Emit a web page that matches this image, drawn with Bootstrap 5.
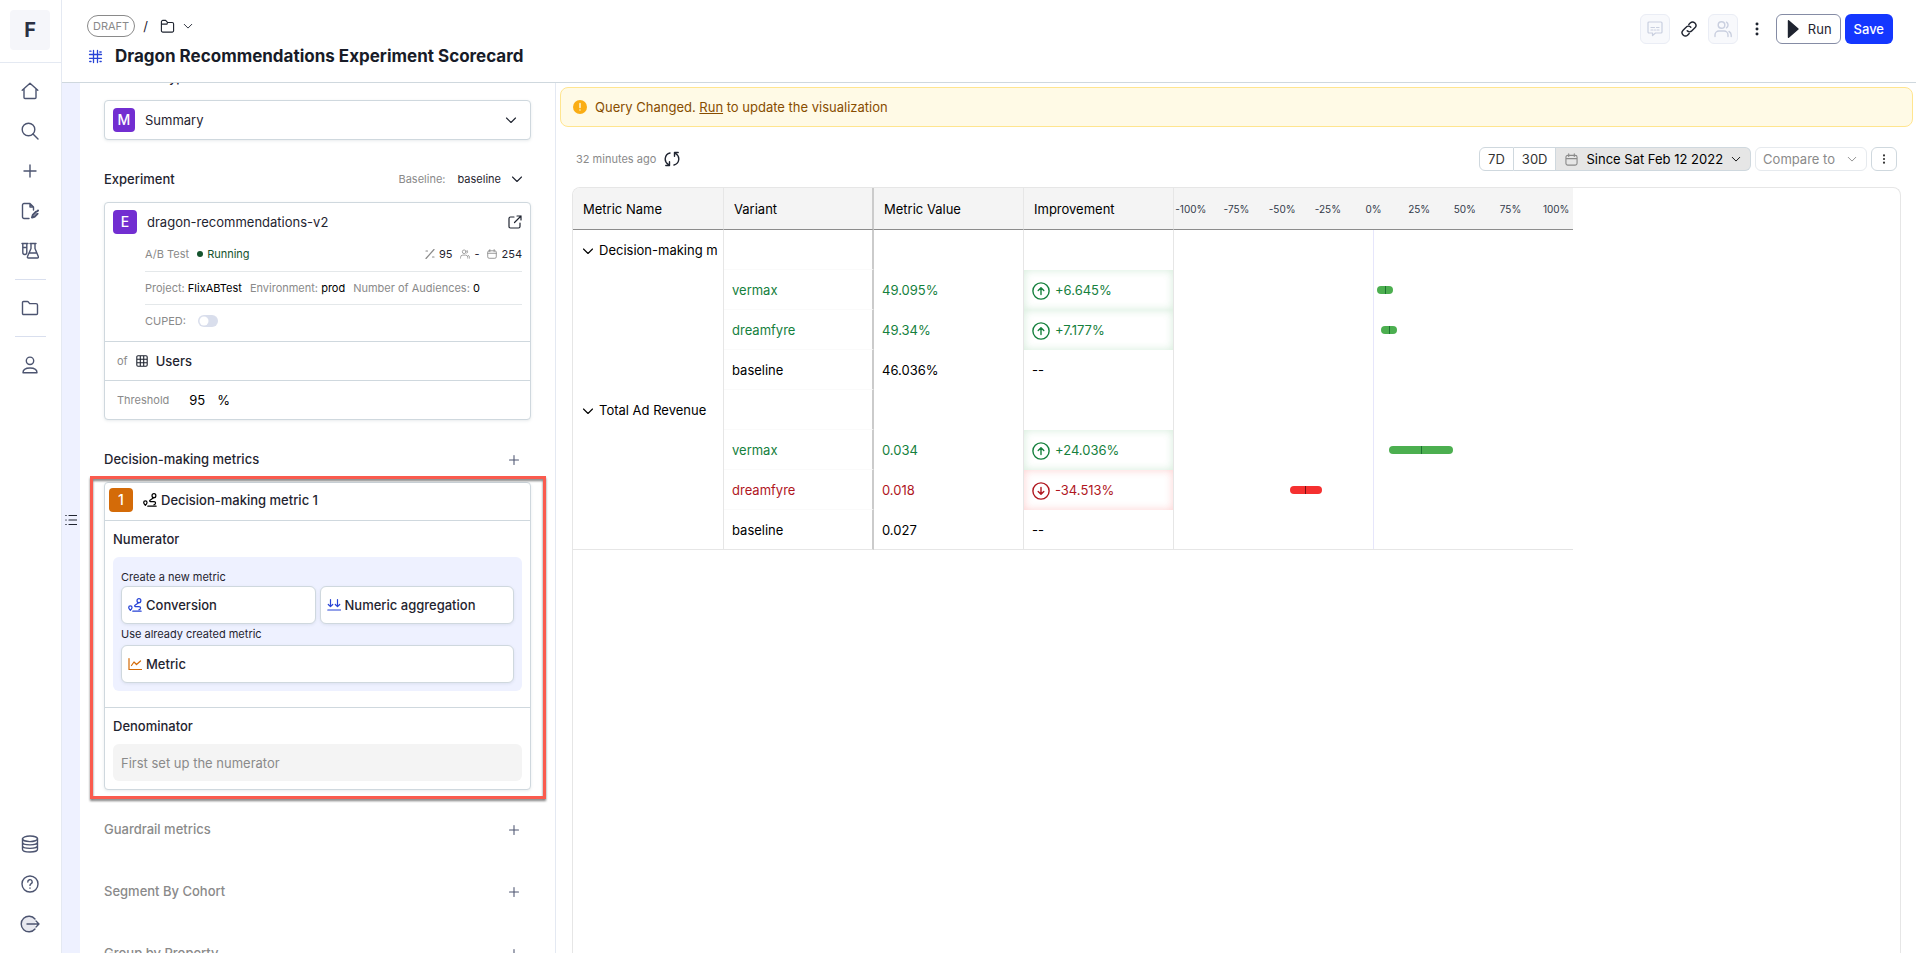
<!DOCTYPE html>
<html lang="en">
<head>
<meta charset="utf-8">
<meta name="viewport" content="width=device-width, initial-scale=1">
<title>Dragon Recommendations Experiment Scorecard</title>
<link href="https://cdn.jsdelivr.net/npm/bootstrap@5.3.0/dist/css/bootstrap.min.css" rel="stylesheet">
<style>
:root{--ink:#1f2430;--slate:#4c5470;--muted:#8a8a8a;--line:#cfd8de;--soft:#e6e6e6;--tint:#eef1ff}
body{font-family:Inter,"Liberation Sans",sans-serif;font-size:13px;line-height:20px;color:var(--ink);background:#fff}
svg{fill:none;stroke:currentColor;stroke-width:1.4;stroke-linecap:round;stroke-linejoin:round;flex:none}
button{color:inherit;font:inherit}
.btn{font-size:13px;line-height:20px;color:inherit}
.app{height:100vh;overflow:hidden}
.fill{min-width:0;min-height:0}
.rail{width:62px;border-right:1px solid #e4e9f2;color:var(--slate)}
.rail .brand{height:63px;border-bottom:1px solid #e4e9f2;padding-top:10px}
.rail .logo{width:40px;height:40px;border-radius:4px;background:#f5f6fa;font-size:20px;font-weight:700;color:#2b3042}
.rail .links{padding-right:1px}
.rail .foot{padding-bottom:9px}
.rail a{height:40px;color:inherit}
.rail hr{width:31px;margin:8px 0;border-color:#d9dfee;opacity:1}
.topbar{height:83px;border-bottom:1px solid var(--line);padding:14px 23px 0 25px}
.crumb{height:26px;margin-bottom:5px}
.pill{border:1px solid #8a8a8a;border-radius:12px;color:#8a8a8a;padding:0 5px;font-size:11px}
.topbar .top-left{margin-top:-1px}
.topbar h1{font-size:17px;line-height:24px;font-weight:700;color:#181c28}
.sq{width:30px;height:30px;padding:0;border-radius:6px}
.sq.off{background:#f8f9fc;border:1px solid #eaedf5;color:#c9cfdf}
.run{height:30px;border:1px solid #858ca5;border-radius:6px;padding:0 8px 0 9px}
.save{height:30px;border:0;border-radius:6px;background:#1437ff;color:#fff;padding:0 9px;font-weight:500}
.strip{width:18px;background:var(--tint)}
.side{width:476px;border-right:1px solid #e4e9f2;padding:0 24px;overflow:hidden}
.scrolled{margin-top:-16px}
.headrow{height:30px}
.ttl{font-weight:500}
.dim{color:var(--muted)}
.box{border:1px solid var(--line);border-radius:4px;box-shadow:0 1px 3px rgba(90,110,130,.14);background:#fff}
.box .sec{border-top:1px solid var(--line)}
.pick{height:40px;padding:0 13px 0 8px;width:100%;margin-top:13px}
.tag{width:24px;height:24px;border-radius:4px;background:#722ed1;color:#fff;font-weight:500;font-size:14px;display:flex;align-items:center;justify-content:center;flex:none;margin-right:10px}
.tag.narrow{width:22px}
.tag.one{background:#d46b08}
.f11{font-size:11px}
.base{gap:10px}
.exphead{padding:7px 8px 0}
.exp{margin-left:32px}
.exp .r{border-bottom:1px solid #e4e8ea;height:33px}
.exp .r.first{height:38px;padding-top:2px}
.exp .last{height:36px;padding-bottom:4px}
.dot{width:6px;height:6px;border-radius:50%;background:#14532d}
.running{color:#14532d}
.line{height:39px;padding:0 12px}
.thr{margin-right:20px}
.form-switch .form-check-input{width:20px;height:12px;margin:0 0 0 4px;border:0;background-color:#d9deec;background-image:url("data:image/svg+xml,%3csvg xmlns='http://www.w3.org/2000/svg' viewBox='-4 -4 8 8'%3e%3ccircle r='3' fill='%23fff'/%3e%3c/svg%3e")}
.num{width:24px;border:0;padding:0;color:#000}
.marked{position:relative}
.marked .frame{position:absolute;inset:-6px -15px -9px -14px;border:3px solid #fa5b4e;filter:drop-shadow(0 2px 1px rgba(0,0,0,.5));pointer-events:none}
.onehead{padding:5px 4px 8px}
.maker{background:var(--tint);border-radius:6px;padding:11px 8px 8px}
.hint{font-size:11px;line-height:18px}
.hint.between{line-height:21px}
.make{height:38px;border:1px solid var(--line);border-radius:6px;background:#fff;box-shadow:0 1px 3px rgba(90,110,130,.12);font-weight:500;padding:0 6px}
.empty{height:37px;border-radius:6px;background:#f4f4f4;color:var(--muted);padding:0 8px}
.later{height:62px}
.plus{width:30px;height:30px;color:var(--slate);border:0;background:none;padding:0;margin-right:2px}
.note{height:40px;margin:4px 3px 0 4px;border:1px solid #ffe58f;border-radius:8px;background:#fffae6;color:#874d00;padding:0 12px}
.note a{color:inherit}
.tools{height:60px;padding:4px 19px 0 20px}
.seg{height:24px;border:1px solid var(--line);background:#fff;padding:0 8px;line-height:20px;color:#333}
.seg.on{background:#e6e6e6;color:#000;padding:0 9px}
.seg.off{border-color:#e6eaee;color:#8a8a8a;padding:0 9px 0 7px}
.seg.more{padding:0 7px}
.board{margin:0 15px 0 16px;border:1px solid var(--soft);border-bottom:0;border-radius:8px 8px 0 0;overflow:hidden}
.grid{width:1000px;table-layout:fixed;border-collapse:separate;border-spacing:0;color:#000;margin:0}
.grid .c1{width:151px}
.grid .c2{width:150px}
.grid th{height:42px;background:#f4f4f4;font-weight:400;border-bottom:1px solid #8c8c8c;padding:0 10px;border-right:1px solid var(--soft)}
.grid td{height:40px;padding:0 8px;border-right:1px solid var(--soft);white-space:nowrap;overflow:hidden}
.grid td:first-child{padding-left:9px}
.grid td svg{margin-right:5px}
.grid td:nth-child(2){border-bottom:1px solid #fafafa}
.grid tr>:nth-child(2){border-right:2px solid #cbcbcb}
.grid tr>:nth-child(5){border-right:0;padding:0}
.grid tbody tr:last-child td{border-bottom:1px solid var(--soft)}
.grid .up{color:#15803d}
.grid .down{color:#b0161e}
.grid td.gu{color:#15803d;box-shadow:inset 0 0 8px rgba(40,160,70,.2)}
.grid td.gd{color:#b0161e;box-shadow:inset 0 0 8px rgba(245,60,60,.24)}
.ticks{display:grid;grid-template-columns:repeat(9,1fr);margin:0 -6px;text-align:center;font-size:10px;color:#333a4a}
.plot{position:relative;height:100%;background:linear-gradient(#e6e6fb,#e6e6fb) 50% 0/1px 100% no-repeat}
.ci{position:absolute;top:50%;height:8px;margin-top:-4px;border-radius:4px;background:linear-gradient(#1c7430,#1c7430) 50% 0/1px 100% no-repeat #4caf50}
.ci.bad{background:linear-gradient(#7a1010,#7a1010) 50% 0/1px 100% no-repeat #f53030}
.blue{color:#2743d6}
.orange{color:#d46b08}
</style>
</head>
<body>
<svg class="d-none">
<symbol id="chev" viewBox="0 0 12 12"><path stroke-width="1.100" d="M1.500 4L6 8.500 10.500 4"/></symbol>
<symbol id="add" viewBox="0 0 16 16"><path d="M8 2v12M2 8h12"/></symbol>
<symbol id="dots" viewBox="0 0 16 16"><g fill="currentColor" stroke="none"><circle cx="8" cy="2.200" r="1.700"/><circle cx="8" cy="8" r="1.700"/><circle cx="8" cy="13.800" r="1.700"/></g></symbol>
<symbol id="cal" viewBox="0 0 14 14"><path stroke-width="1.200" d="M3 2.500h8a2 2 0 012 2V11a2 2 0 01-2 2H3a2 2 0 01-2-2V4.500a2 2 0 012-2zM1 6h12M4 .8v3M10 .8v3"/></symbol>
<symbol id="path" viewBox="0 0 16 16"><circle cx="12.500" cy="3" r="2.200"/><path d="M12.500 5.200L8 8.200c-.8.600-.4 1.600.6 1.600h4a1.700 1.700 0 010 3.500M5.500 15h9.500"/><path d="M2.700 14.200C1.500 13 .8 11.800.8 10.900a1.900 1.900 0 013.800 0c0 .9-.7 2.100-1.900 3.300z"/></symbol>
<symbol id="people" viewBox="0 0 18 18"><circle cx="7.500" cy="5" r="3.300"/><path d="M1 16.500v-1.500a4 4 0 014-4h5a4 4 0 014 4v1.500M12.500 2.200a3.300 3.300 0 010 5.600M15 11.500a4 4 0 012.200 3.500v1.500"/></symbol>
<symbol id="folder" viewBox="0 0 18 18"><path d="M1.500 3.500a1 1 0 011-1h3.800a1.500 1.500 0 011.200.6l1.100 1.500h6.400a1.500 1.500 0 011.500 1.500v8.400a1 1 0 01-1 1h-13a1 1 0 01-1-1z"/></symbol>
<symbol id="folder2" viewBox="0 0 16 16"><path stroke-width="1.200" d="M1.500 5.500V3A1.500 1.500 0 013 1.500h3L8 3.700h5A1.500 1.500 0 0114.500 5.200v7.300A1.500 1.500 0 0113 14H3a1.500 1.500 0 01-1.500-1.500zM1.500 5.500h6L8 3.700"/></symbol>
<symbol id="arrow" viewBox="0 0 18 18"><circle cx="9" cy="9" r="8.100"/><path d="M9 12.500v-6.500M6.200 8.500L9 5.700l2.800 2.800"/></symbol>
</svg>

<div class="app d-flex">
  <nav class="rail d-flex flex-column flex-shrink-0">
    <div class="brand links d-flex justify-content-center"><div class="logo d-flex align-items-center justify-content-center">F</div></div>
    <div class="links flex-grow-1 d-flex flex-column align-items-center pt-2">
      <a href="#" aria-label="Home" class="d-flex align-items-center"><svg width="18" height="18" viewBox="0 0 18 18"><path d="M1.200 8.200L9 1.200l7.800 7M3 7v8.500a1 1 0 001 1h10a1 1 0 001-1V7"/></svg></a>
      <a href="#" aria-label="Search" class="d-flex align-items-center"><svg width="18" height="18" viewBox="0 0 18 18"><circle cx="7.500" cy="7.500" r="6.300"/><path d="M12 12l5 5"/></svg></a>
      <a href="#" aria-label="Create" class="d-flex align-items-center"><svg width="16" height="16"><use href="#add"/></svg></a>
      <a href="#" aria-label="Drafts" class="d-flex align-items-center"><svg width="18" height="18" viewBox="0 0 18 18"><path d="M8 16.500H3a1.500 1.500 0 01-1.500-1.500V3A1.500 1.500 0 013 1.500h6L12.500 5v3M9 1.500V5h3.500"/><path d="M11 15.500l.8-2.500 3.200-3.200M11 15.500l2.500-.8 3-3M16.500 9l.5-.5" stroke-width="2"/></svg></a>
      <a href="#" aria-label="Experiments" class="d-flex align-items-center"><svg width="18" height="18" viewBox="0 0 18 18"><path d="M1 1.500h6M1.800 1.500v9a2 2 0 004 0v-9M1.800 5.500h4M9 1.500h6M10 1.500v5l-3.500 8a1 1 0 001 1.500h8.800a1 1 0 001-1.500L14 6.500v-5M8.500 11h7"/></svg></a>
      <hr>
      <a href="#" aria-label="Files" class="d-flex align-items-center"><svg width="18" height="18"><use href="#folder"/></svg></a>
      <hr>
      <a href="#" aria-label="Profile" class="d-flex align-items-center"><svg width="18" height="18" viewBox="0 0 18 18"><circle cx="9" cy="4.800" r="3.700"/><path d="M2 16.800c0-3 2.500-4.800 7-4.800s7 1.800 7 4.800z"/></svg></a>
      <div class="mt-auto foot">
        <a href="#" aria-label="Data" class="d-flex align-items-center justify-content-center"><svg width="18" height="18" viewBox="0 0 18 18"><ellipse cx="9" cy="3.800" rx="7.500" ry="2.800"/><path d="M1.500 3.800v10.400c0 1.500 3 2.800 7.500 2.800s7.500-1.300 7.500-2.800V3.800M1.500 7.300c0 1.500 3 2.600 7.500 2.600s7.500-1.100 7.500-2.600M1.500 10.800c0 1.500 3 2.600 7.500 2.600s7.500-1.100 7.500-2.600"/></svg></a>
        <a href="#" aria-label="Help" class="d-flex align-items-center justify-content-center"><svg width="18" height="18" viewBox="0 0 18 18"><circle cx="9" cy="9" r="8"/><path d="M6.800 7a2.200 2.200 0 113.400 1.700c-.8.500-1.200.8-1.200 1.700M9 13v.2"/></svg></a>
        <a href="#" aria-label="Log out" class="d-flex align-items-center justify-content-center"><svg width="20" height="18" viewBox="0 0 20 18"><path fill="#e8e9f0" d="M15 4a7.800 7.800 0 100 10"/><path d="M7 9h12M16 6l3 3-3 3"/></svg></a>
      </div>
    </div>
  </nav>

  <div class="fill flex-grow-1 d-flex flex-column">
    <header class="topbar d-flex justify-content-between flex-shrink-0">
      <div class="top-left">
        <div class="crumb d-flex align-items-center">
          <span class="pill">DRAFT</span><span class="mx-2">/</span>
          <button class="btn p-0 border-0 d-flex align-items-center gap-2 ms-1" aria-label="Folder"><svg width="15" height="15"><use href="#folder2"/></svg><svg width="10" height="10"><use href="#chev"/></svg></button>
        </div>
        <div class="d-flex align-items-center gap-2">
          <svg width="16" height="16" viewBox="0 0 16 16" class="blue"><path stroke-width="1.300" d="M6.500 2.500v12M10.500 2.500v12M2.500 6.500h12M2.500 10.300h12"/><path stroke-width="1.300" d="M2.700 3.200h1.300M12.800 4h1.400M2.700 13.500h1.300M13 13.500h1.200"/></svg>
          <h1 class="m-0 ps-1">Dragon Recommendations Experiment Scorecard</h1>
        </div>
      </div>
      <div class="d-flex align-items-start">
        <button class="sq off d-flex align-items-center justify-content-center" aria-label="Comments"><svg width="16" height="16" viewBox="0 0 16 16"><path stroke-width="1.200" d="M2 1h12a1 1 0 011 1v9a1 1 0 01-1 1h-5.500L5.500 14.500V12H2a1 1 0 01-1-1V2a1 1 0 011-1zM4 6.500h3.500M4 9h2M7.500 9h1M9.500 6.500h2.500M10 9h2"/></svg></button>
        <button class="sq btn border-0 mx-1 d-flex align-items-center justify-content-center" aria-label="Link"><svg width="16" height="16" viewBox="0 0 16 16"><path d="M6.200 9.800a3.200 3.200 0 004.700 0l3-3a3.200 3.200 0 00-4.700-4.700L7.800 3.500M9.800 6.200a3.200 3.200 0 00-4.700 0l-3 3a3.200 3.200 0 004.700 4.700l1.400-1.400"/></svg></button>
        <button class="sq off d-flex align-items-center justify-content-center" aria-label="Share"><svg width="18" height="18"><use href="#people"/></svg></button>
        <button class="sq btn border-0 mx-1 d-flex align-items-center justify-content-center" aria-label="More"><svg width="14" height="14"><use href="#dots"/></svg></button>
        <button class="run bg-white d-flex align-items-center gap-2"><svg width="14" height="18" viewBox="0 0 14 18"><path fill="currentColor" d="M2.500.8l9.500 8.200-9.500 8.200z"/></svg>Run</button>
        <button class="save ms-1">Save</button>
      </div>
    </header>

    <div class="fill flex-grow-1 d-flex">
      <div class="strip d-flex align-items-center justify-content-center flex-shrink-0"><svg width="12" height="12" viewBox="0 0 12 12" class="mt-1"><path stroke-width="1.200" d="M.8 1.500h.4M.8 6h.4M.8 10.500h.4M4 1.500h7.500M4 6h7.500M4 10.500h7.500"/></svg></div>

      <aside class="side flex-shrink-0">
        <div class="scrolled">
          <div class="ttl">Function Type</div>
          <button class="box pick d-flex align-items-center mb-4"><span class="tag narrow">M</span><span>Summary</span><svg class="ms-auto" width="12" height="12"><use href="#chev"/></svg></button>

          <div class="headrow d-flex align-items-center mb-2">
            <span class="ttl me-auto">Experiment</span><span class="dim f11 me-2">Baseline:</span><button class="btn p-0 border-0 f11 base me-2 ms-1 d-flex align-items-center">baseline <svg width="12" height="12"><use href="#chev"/></svg></button>
          </div>

          <section class="box">
            <div class="exphead">
              <div class="d-flex align-items-center"><span class="tag">E</span>dragon-recommendations-v2<svg class="ms-auto" width="14" height="14" viewBox="0 0 14 14"><path stroke-width="1.200" d="M6 2H2.500A1.500 1.500 0 001 3.500v8A1.500 1.500 0 002.500 13h8a1.500 1.500 0 001.500-1.500V8M9 1h4v4M13 1L6.500 7.500"/></svg></div>
              <div class="exp f11">
                <div class="r first d-flex align-items-center gap-2"><span class="dim">A/B Test</span><span class="running d-flex align-items-center gap-1"><i class="dot"></i>Running</span>
                  <span class="ms-auto d-flex align-items-center gap-1"><svg class="dim" width="10" height="10" viewBox="0 0 10 10"><path stroke-width="1.200" d="M1 9.500l8-9M1 2h1.500M7.500 8H9"/></svg>95</span>
                  <span class="d-flex align-items-center gap-1"><svg class="dim" width="10" height="10"><use href="#people"/></svg>-</span>
                  <span class="d-flex align-items-center gap-1"><svg class="dim" width="10" height="10"><use href="#cal"/></svg>254</span></div>
                <div class="r d-flex align-items-center gap-2"><span class="dim">Project: <span class="text-black">FlixABTest</span></span><span class="dim">Environment: <span class="text-black">prod</span></span><span class="dim">Number of Audiences: <span class="text-black">0</span></span></div>
                <div class="last form-switch d-flex align-items-center ps-0 gap-2"><label class="dim" for="cuped">CUPED:</label><input class="form-check-input" type="checkbox" role="switch" id="cuped"></div>
              </div>
            </div>
            <div class="sec line d-flex align-items-center gap-1"><span class="dim f11 me-1">of</span><svg width="12" height="12" viewBox="0 0 12 12" class="me-1"><path stroke-width="1.100" d="M2 .8h8A1.200 1.200 0 0111.200 2v8A1.200 1.200 0 0110 11.200H2A1.200 1.200 0 01.8 10V2A1.200 1.200 0 012 .8zM1 4.300h10M1 7.700h10M4.300 1v10M7.700 1v10"/></svg><span class="fw-medium">Users</span></div>
            <div class="sec line d-flex align-items-center"><label class="dim f11 thr" for="thr">Threshold</label><input class="num" id="thr" value="95"><span class="text-black ms-1">%</span></div>
          </section>

          <div class="headrow d-flex align-items-center mt-4 mb-2"><span class="ttl me-auto">Decision-making metrics</span><button class="plus" aria-label="Add decision-making metric"><svg width="12" height="12"><use href="#add"/></svg></button></div>

          <div class="marked">
            <section class="box">
              <div class="onehead d-flex align-items-center"><span class="tag one">1</span><svg width="14" height="14" class="text-black me-1"><use href="#path"/></svg><span class="fw-medium">Decision-making metric 1</span></div>
              <div class="sec px-2 pt-2 pb-3">
                <div class="ttl mb-2">Numerator</div>
                <div class="maker">
                  <div class="hint">Create a new metric</div>
                  <div class="d-flex gap-1">
                    <button class="make w-50 d-flex align-items-center gap-1"><svg width="14" height="14" class="blue"><use href="#path"/></svg>Conversion</button>
                    <button class="make w-50 d-flex align-items-center gap-1"><svg width="14" height="14" viewBox="0 0 14 14" class="blue"><path stroke-width="1.200" d="M3.500 1.500v7M1.300 6.500l2.200 2.200 2.200-2.200M10.500 1.500v7M8.300 6.500l2.200 2.200 2.200-2.200M.8 12h12.700"/></svg>Numeric aggregation</button>
                  </div>
                  <div class="hint between">Use already created metric</div>
                  <button class="make w-100 d-flex align-items-center gap-1"><svg width="14" height="14" viewBox="0 0 14 14" class="orange"><path stroke-width="1.200" d="M1 1.500V12.500h12.500M3.500 8.500l2.500-3.500 2.500 2.500L12.500 4"/></svg>Metric</button>
                </div>
              </div>
              <div class="sec p-2"><div class="ttl mb-2">Denominator</div><div class="empty d-flex align-items-center">First set up the numerator</div></div>
            </section>
            <div class="frame"></div>
          </div>

          <div class="later d-flex align-items-center dim mt-2"><span class="ttl me-auto">Guardrail metrics</span><button class="plus" aria-label="Add guardrail metric"><svg width="12" height="12"><use href="#add"/></svg></button></div>
          <div class="later d-flex align-items-center dim"><span class="ttl me-auto">Segment By Cohort</span><button class="plus" aria-label="Add cohort"><svg width="12" height="12"><use href="#add"/></svg></button></div>
          <div class="later d-flex align-items-center dim"><span class="ttl me-auto">Group by Property</span><button class="plus" aria-label="Add property"><svg width="12" height="12"><use href="#add"/></svg></button></div>
        </div>
      </aside>

      <main class="fill flex-grow-1 d-flex flex-column">
        <div class="note d-flex align-items-center gap-2 flex-shrink-0"><svg width="14" height="14" viewBox="0 0 14 14"><circle cx="7" cy="7" r="7" fill="#faad14" stroke="none"/><path stroke="#fffbe6" d="M7 3.500v4M7 10v.1"/></svg><span>Query Changed. <a href="#">Run</a> to update the visualization</span></div>
        <div class="tools d-flex align-items-center flex-shrink-0">
          <span class="dim f11 me-2">32 minutes ago</span>
          <button class="btn p-0 border-0 me-auto d-flex" aria-label="Refresh"><svg width="16" height="16" viewBox="0 0 16 16"><path d="M6 2A6.200 6.200 0 004.500 13.500M1.800 14.500h3.700v-3.700M10 14a6.200 6.200 0 001.500-11.500M14.200 1.500h-3.700v3.700"/></svg></button>
          <div class="d-flex">
            <button class="seg rounded-start">7D</button><button class="seg border-start-0">30D</button><button class="seg on border-start-0 rounded-end d-flex align-items-center gap-2"><svg width="13" height="13" class="dim"><use href="#cal"/></svg>Since Sat Feb 12 2022<svg width="10" height="10"><use href="#chev"/></svg></button>
          </div>
          <button class="seg off rounded ms-1 d-flex align-items-center gap-2">Compare to <svg width="10" height="10" class="ms-1"><use href="#chev"/></svg></button>
          <button class="seg more rounded ms-1 d-flex align-items-center" aria-label="Options"><svg width="10" height="10"><use href="#dots"/></svg></button>
        </div>
        <div class="board flex-grow-1">
          <table class="grid">
            <colgroup><col class="c1"><col class="c2"><col class="c2"><col class="c2"><col></colgroup>
            <thead><tr><th>Metric Name</th><th>Variant</th><th>Metric Value</th><th>Improvement</th><th><div class="ticks"><span>-100%</span><span>-75%</span><span>-50%</span><span>-25%</span><span>0%</span><span>25%</span><span>50%</span><span>75%</span><span>100%</span></div></th></tr></thead>
            <tbody>
              <tr><td><svg width="12" height="12"><use href="#chev"/></svg>Decision-making m</td><td></td><td></td><td></td><td><div class="plot"></div></td></tr>
              <tr><td></td><td class="up">vermax</td><td class="up">49.095%</td><td class="gu"><svg width="18" height="18"><use href="#arrow"/></svg>+6.645%</td><td><div class="plot"><span class="ci" style="left:51%;width:4%"></span></div></td></tr>
              <tr><td></td><td class="up">dreamfyre</td><td class="up">49.34%</td><td class="gu"><svg width="18" height="18"><use href="#arrow"/></svg>+7.177%</td><td><div class="plot"><span class="ci" style="left:52%;width:4%"></span></div></td></tr>
              <tr><td></td><td>baseline</td><td>46.036%</td><td>--</td><td><div class="plot"></div></td></tr>
              <tr><td><svg width="12" height="12"><use href="#chev"/></svg>Total Ad Revenue</td><td></td><td></td><td></td><td><div class="plot"></div></td></tr>
              <tr><td></td><td class="up">vermax</td><td class="up">0.034</td><td class="gu"><svg width="18" height="18"><use href="#arrow"/></svg>+24.036%</td><td><div class="plot"><span class="ci" style="left:54%;width:16%"></span></div></td></tr>
              <tr><td></td><td class="down">dreamfyre</td><td class="down">0.018</td><td class="gd"><svg width="18" height="18" viewBox="0 0 18 18"><circle cx="9" cy="9" r="8.100"/><path d="M9 5.500V12M6.200 9.500L9 12.300l2.800-2.800"/></svg>-34.513%</td><td><div class="plot"><span class="ci bad" style="left:29%;width:8%"></span></div></td></tr>
              <tr><td></td><td>baseline</td><td>0.027</td><td>--</td><td><div class="plot"></div></td></tr>
            </tbody>
          </table>
        </div>
      </main>
    </div>
  </div>
</div>
<script src="https://cdn.jsdelivr.net/npm/bootstrap@5.3.0/dist/js/bootstrap.bundle.min.js"></script>
</body>
</html>
